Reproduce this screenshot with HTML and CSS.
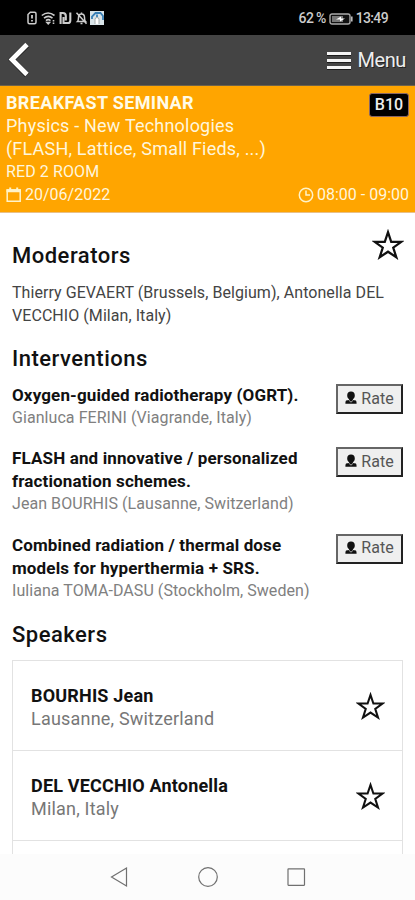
FILE: index.html
```html
<!DOCTYPE html>
<html lang="en">
<head>
<meta charset="utf-8">
<meta name="viewport" content="width=device-width, initial-scale=1">
<title>Breakfast Seminar</title>
<link rel="stylesheet" href="styles.css">
</head>
<body>
<svg class="defs" width="0" height="0" aria-hidden="true">
  <symbol id="star" viewBox="0 0 30 30"><path d="M15 3 18 12 27.500 12 19.900 17.500 22.800 26.500 15 21.300 7.200 26.500 10.100 17.500 2.500 12 12 12Z" fill="none" stroke="#111" stroke-width="2.100"/></symbol>
  <symbol id="person" viewBox="0 0 12 14"><path d="M6 .6c2.500 0 3.800 1.600 3.800 3.900 0 1.700-.7 3-1.900 3.700v.9l3 .5c.5.400.7 1.600.7 3.100H.4c0-1.500.2-2.700.7-3.100l3-.5v-.9C2.900 7.500 2.200 6.200 2.200 4.500 2.200 2.200 3.500.6 6 .6Z" fill="#111"/><path d="m3.800 9.200 2.200 2 2.200-2" fill="none" stroke="#bbb" stroke-width=".9"/></symbol>
</svg>
<div class="screen">
  <div class="status">
    <div class="status-left">
      <svg width="10" height="14" viewBox="0 0 10 14"><path d="M3.300 1.200h4.200q1.500 0 1.500 1.500v8.600q0 1.500-1.500 1.500h-5q-1.500 0-1.500-1.500V3.500Z" fill="none" stroke="#ccc" stroke-width="1.500"/><path d="M5 4v3.500M5 9v1.500" stroke="#ccc" stroke-width="1.800"/></svg>
      <svg width="15" height="14" viewBox="0 0 15 14" fill="none" stroke="#ccc" stroke-width="1.600"><path d="M.8 4.500q6.200-5 12.700 0M3 7.200q4.300-3.600 8.500 0M5 9.600q2.200-2 4.500 0"/><path d="m6 11.500 1.200 1.300 1.200-1.300ZM12.500 9v1.500m0 1v1.500" fill="#ccc"/></svg>
      <svg width="13" height="14" viewBox="0 0 13 14"><path d="M1.600 13V2h2.200q3 0 3 3v4.500M4.500 6v6h4.200q2.600 0 2.600-2.600V1.500" fill="none" stroke="#ccc" stroke-width="2.100"/></svg>
      <svg width="13" height="14" viewBox="0 0 13 14"><path d="M2.500 10.500q1-1 1-4 0-3.500 3-3.500t3 3.500q0 3 1 4ZM5.500 12.500h2M6.500 1.500V3M1.500 1.800l10 11" fill="none" stroke="#ccc" stroke-width="1.500"/></svg>
      <svg width="14" height="14" viewBox="0 0 14 14"><path d="M0 0h14v14H0Z" fill="#d9e4e8"/><path d="M2 8V5.500L5.500 2h5L13 5v4M7 3.500V6" fill="none" stroke="#397fb5" stroke-width="1.800"/><path d="M5 13V8.500q0-2 2-2t2 2V13" fill="#fff" stroke="#a4a9a9"/></svg>
    </div>
    <div class="status-right">
      <span class="percent">62 %</span>
      <svg width="24" height="12" viewBox="0 0 24 12"><rect x="1" y="1" width="20" height="10" rx="2" fill="#111" stroke="#aaa" stroke-width="1.400"/><path d="M3 3h11v6H3Z" fill="#777"/><path d="m7 6.500 5-3v2h4l-5 3v-2Z" fill="#fff"/><path d="M22.800 3.500v5" stroke="#bbb" stroke-width="1.600"/></svg>
      <span class="clock">13:49</span>
    </div>
  </div>
  <header class="toolbar">
    <svg width="24" height="38" viewBox="0 0 24 38"><path d="M20 4 5 18.500 20 34" fill="none" stroke="#222" stroke-width="6"/><path d="M20 3.500 5 18.500 20 33.500" fill="none" stroke="#fff" stroke-width="4.800"/></svg>
    <div class="menu">
      <div class="bars"><i></i><i></i><i></i></div>
      <span>Menu</span>
    </div>
  </header>
  <section class="session">
    <div class="session-top">
      <div>
        <div class="kind">BREAKFAST SEMINAR</div>
        <div class="topic">Physics - New Technologies<br>(FLASH, Lattice, Small Fieds, ...)</div>
      </div>
      <span class="code">B10</span>
    </div>
    <div class="room">RED 2 ROOM</div>
    <div class="when">
      <div class="when-part">
        <svg width="16" height="16" viewBox="0 0 16 16"><path d="M1.200 3h13v11.300h-13Z" fill="none" stroke="#fff3c8" stroke-width="1.500"/><path d="M.5 2.300h14.400v3H.5ZM3.200.6h2v2h-2ZM10.200.6h2v2h-2Z" fill="#fff3c8"/></svg>
        <span class="date">20/06/2022</span>
      </div>
      <div class="when-part">
        <svg width="16" height="16" viewBox="0 0 16 16" fill="none" stroke="#fff3c8" stroke-width="1.500"><circle cx="8" cy="8" r="6.700"/><path d="M8 3.500V8h4"/></svg>
        <span class="time">08:00 - 09:00</span>
      </div>
    </div>
  </section>
  <main class="content">
    <div class="head">
      <h2 class="h-mod">Moderators</h2>
      <svg class="star-lg"><use href="#star"/></svg>
    </div>
    <p class="moderators">Thierry GEVAERT (Brussels, Belgium), Antonella DEL<br>VECCHIO (Milan, Italy)</p>
    <h2 class="h-int">Interventions</h2>
    <article class="talk">
      <div><h3>Oxygen-guided radiotherapy (OGRT).</h3><p>Gianluca FERINI (Viagrande, Italy)</p></div>
      <button class="rate"><svg width="12" height="14"><use href="#person"/></svg>Rate</button>
    </article>
    <article class="talk">
      <div><h3>FLASH and innovative / personalized<br>fractionation schemes.</h3><p>Jean BOURHIS (Lausanne, Switzerland)</p></div>
      <button class="rate"><svg width="12" height="14"><use href="#person"/></svg>Rate</button>
    </article>
    <article class="talk">
      <div><h3>Combined radiation / thermal dose<br>models for hyperthermia + SRS.</h3><p>Iuliana TOMA-DASU (Stockholm, Sweden)</p></div>
      <button class="rate"><svg width="12" height="14"><use href="#person"/></svg>Rate</button>
    </article>
    <h2 class="h-spk">Speakers</h2>
    <div class="speakers">
      <div class="speaker">
        <div><h3>BOURHIS Jean</h3><p>Lausanne, Switzerland</p></div>
        <svg class="star"><use href="#star"/></svg>
      </div>
      <div class="speaker">
        <div><h3>DEL VECCHIO Antonella</h3><p>Milan, Italy</p></div>
        <svg class="star"><use href="#star"/></svg>
      </div>
    </div>
  </main>
  <nav class="nav">
    <svg width="20" height="22" viewBox="0 0 20 22"><path d="M17.500 2v18L2.500 11Z"/></svg>
    <svg width="22" height="22" viewBox="0 0 22 22"><circle cx="11" cy="11" r="9.300"/></svg>
    <svg width="20" height="22" viewBox="0 0 20 22"><rect x="1" y="2.800" width="16.500" height="16.500" rx=".5"/></svg>
  </nav>
</div>
</body>
</html>
```
FILE: styles.css
```css
* { box-sizing: border-box; margin: 0; padding: 0; }
body { font-family: Roboto, "Liberation Sans", sans-serif; background: #fff; color: #111; }
svg { display: block; flex: none; }
.defs { position: absolute; }
.screen { width: 415px; height: 900px; display: flex; flex-direction: column; overflow: hidden; white-space: nowrap; }

.status { flex: none; height: 35px; background: #000; display: flex; justify-content: space-between; padding: 11px 27px 0 27px; color: #ccc; }
.status-left { display: flex; gap: 3px; height: 14px; }
.status-left svg:nth-child(2) { margin-left: 1px; }
.status-left svg:nth-child(5) { margin-left: -1px; }
.status-right { display: flex; align-items: center; height: 15px; font-size: 14px; font-weight: 500; line-height: 15px; gap: 3px; letter-spacing: -.65px; }

.toolbar { flex: none; height: 51px; background: #444; border-bottom: 1px solid #6d624b; display: flex; align-items: center; justify-content: space-between; padding: 0 9px 0 7px; }
.menu { display: flex; align-items: center; gap: 6px; color: #eee; font-size: 20px; letter-spacing: -.4px; text-shadow: 1px 1px 0 #222; }
.bars { display: flex; flex-direction: column; gap: 4px; width: 24px; }
.bars i { height: 3px; background: #f4f4f4; box-shadow: 0 1px 0 #1c1c1c; }

.session { flex: none; height: 127px; background: #ffa500; border-bottom: 1px solid #e8c088; padding: 5px 6px 0 6px; color: #fff6dc; line-height: 23px; }
.session-top { display: flex; justify-content: space-between; align-items: flex-start; }
.kind { font-weight: 700; font-size: 18px; letter-spacing: .35px; color: #fffbe8; }
.topic { font-size: 18px; letter-spacing: .2px; }
.code { margin-top: 2px; width: 40px; height: 24px; border: 1px solid #866; border-radius: 3px; background: #000; color: #eee; font-size: 16px; font-weight: 500; line-height: 22px; text-align: center; }
.room { font-size: 16px; letter-spacing: .1px; }
.when { display: flex; justify-content: space-between; font-size: 16px; }
.when-part { display: flex; align-items: center; gap: 3px; }

.content { flex: 1; min-height: 0; overflow: hidden; padding: 0 12px; }
.head { display: flex; justify-content: space-between; height: 68px; }
h2 { font-weight: 500; font-size: 22px; line-height: 30px; letter-spacing: .5px; color: #111; }
.h-mod { margin-top: 28px; }
.star-lg { width: 32px; height: 32px; margin: 16px -1px 0 0; }
.moderators { font-size: 16px; line-height: 23px; letter-spacing: .06px; color: #444; }
.h-int { margin-top: 17px; }
.talk { display: flex; justify-content: space-between; align-items: flex-start; margin-bottom: 18px; }
.h-int + .talk { margin-top: 10px; }
h3 { font-weight: 700; font-size: 17px; line-height: 23px; letter-spacing: .14px; color: #111; }
.talk p { font-size: 16px; line-height: 22.3px; letter-spacing: .06px; color: #808080; }
.rate { display: flex; align-items: center; justify-content: center; gap: 4px; width: 67px; height: 30px; border: 2px solid; border-color: #666 #222 #222 #666; background: #efefef; color: #555; font: 16px Roboto, sans-serif; padding-bottom: 2px; }
.h-spk { margin-top: 16px; }
.speakers { margin-top: 10px; border: 1px solid #e2e2e2; }
.speaker { height: 90px; border-bottom: 1px solid #e2e2e2; padding: 23px 17px 0 18px; display: flex; justify-content: space-between; }
.speaker:last-child { margin-bottom: 30px; }
.speaker h3 { font-size: 18px; letter-spacing: .18px; }
.speaker p { font-size: 18px; line-height: 23px; letter-spacing: .2px; color: #777; }
.star { width: 29px; height: 29px; margin-top: 8px; }

.nav { flex: none; height: 46px; background: #fcfcfc; display: flex; justify-content: center; align-items: center; gap: 68px; }
.nav svg { fill: none; stroke: #707070; stroke-width: 1.200; }
```
